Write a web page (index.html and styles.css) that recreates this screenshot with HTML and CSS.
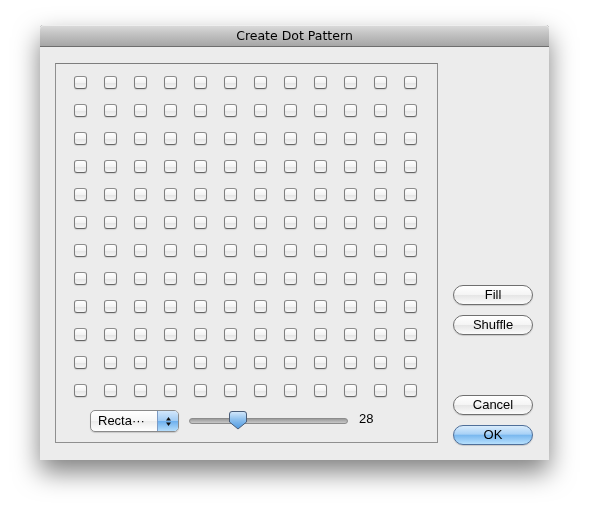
FILE: index.html
```html
<!DOCTYPE html>
<html>
<head>
<meta charset="utf-8">
<link rel="stylesheet" href="styles.css">
</head>
<body>
<div class="window">
  <div class="titlebar">Create Dot Pattern</div>
  <div class="content">
    <div class="box">
      <div class="grid">
        <span class="cb"></span><span class="cb"></span><span class="cb"></span><span class="cb"></span><span class="cb"></span><span class="cb"></span><span class="cb"></span><span class="cb"></span><span class="cb"></span><span class="cb"></span><span class="cb"></span><span class="cb"></span>
        <span class="cb"></span><span class="cb"></span><span class="cb"></span><span class="cb"></span><span class="cb"></span><span class="cb"></span><span class="cb"></span><span class="cb"></span><span class="cb"></span><span class="cb"></span><span class="cb"></span><span class="cb"></span>
        <span class="cb"></span><span class="cb"></span><span class="cb"></span><span class="cb"></span><span class="cb"></span><span class="cb"></span><span class="cb"></span><span class="cb"></span><span class="cb"></span><span class="cb"></span><span class="cb"></span><span class="cb"></span>
        <span class="cb"></span><span class="cb"></span><span class="cb"></span><span class="cb"></span><span class="cb"></span><span class="cb"></span><span class="cb"></span><span class="cb"></span><span class="cb"></span><span class="cb"></span><span class="cb"></span><span class="cb"></span>
        <span class="cb"></span><span class="cb"></span><span class="cb"></span><span class="cb"></span><span class="cb"></span><span class="cb"></span><span class="cb"></span><span class="cb"></span><span class="cb"></span><span class="cb"></span><span class="cb"></span><span class="cb"></span>
        <span class="cb"></span><span class="cb"></span><span class="cb"></span><span class="cb"></span><span class="cb"></span><span class="cb"></span><span class="cb"></span><span class="cb"></span><span class="cb"></span><span class="cb"></span><span class="cb"></span><span class="cb"></span>
        <span class="cb"></span><span class="cb"></span><span class="cb"></span><span class="cb"></span><span class="cb"></span><span class="cb"></span><span class="cb"></span><span class="cb"></span><span class="cb"></span><span class="cb"></span><span class="cb"></span><span class="cb"></span>
        <span class="cb"></span><span class="cb"></span><span class="cb"></span><span class="cb"></span><span class="cb"></span><span class="cb"></span><span class="cb"></span><span class="cb"></span><span class="cb"></span><span class="cb"></span><span class="cb"></span><span class="cb"></span>
        <span class="cb"></span><span class="cb"></span><span class="cb"></span><span class="cb"></span><span class="cb"></span><span class="cb"></span><span class="cb"></span><span class="cb"></span><span class="cb"></span><span class="cb"></span><span class="cb"></span><span class="cb"></span>
        <span class="cb"></span><span class="cb"></span><span class="cb"></span><span class="cb"></span><span class="cb"></span><span class="cb"></span><span class="cb"></span><span class="cb"></span><span class="cb"></span><span class="cb"></span><span class="cb"></span><span class="cb"></span>
        <span class="cb"></span><span class="cb"></span><span class="cb"></span><span class="cb"></span><span class="cb"></span><span class="cb"></span><span class="cb"></span><span class="cb"></span><span class="cb"></span><span class="cb"></span><span class="cb"></span><span class="cb"></span>
        <span class="cb"></span><span class="cb"></span><span class="cb"></span><span class="cb"></span><span class="cb"></span><span class="cb"></span><span class="cb"></span><span class="cb"></span><span class="cb"></span><span class="cb"></span><span class="cb"></span><span class="cb"></span>
      </div>
      <div class="controls">
        <div class="popup">
          <span class="popup-label">Recta···</span>
          <span class="popup-arrows">
            <svg width="7" height="11" viewBox="0 0 7 11"><path d="M3.5 1 L6 4.5 L1 4.5 Z" fill="#111"/><path d="M3.5 10 L6 6.5 L1 6.5 Z" fill="#111"/></svg>
          </span>
        </div>
        <div class="slider">
          <div class="track"></div>
          <svg class="knob" width="18" height="19" viewBox="0 0 18 19">
            <defs>
              <linearGradient id="kg" x1="0" y1="0" x2="0" y2="1">
                <stop offset="0" stop-color="#d6e9fb"/>
                <stop offset="0.45" stop-color="#8fc1ee"/>
                <stop offset="1" stop-color="#4d98e0"/>
              </linearGradient>
            </defs>
            <path d="M3 0.5 H15 Q17.5 0.5 17.5 3 V11 L9 18 L0.5 11 V3 Q0.5 0.5 3 0.5 Z" fill="url(#kg)" stroke="#4a5d78" stroke-width="1"/>
          </svg>
        </div>
        <span class="value">28</span>
      </div>
    </div>
    <div class="side">
      <button class="btn first">Fill</button>
      <button class="btn">Shuffle</button>
      <button class="btn gap">Cancel</button>
      <button class="btn default">OK</button>
    </div>
  </div>
</div>
</body>
</html>
```

FILE: styles.css
```css
html, body {
  margin: 0;
  padding: 0;
  background: #ffffff;
}
body {
  padding: 25px 0 60px 40px;
  font-family: "DejaVu Sans", "Liberation Sans", sans-serif;
  color: #000;
}
.window {
  width: 509px;
  height: 435px;
  background: #ececec;
  border-radius: 4px 4px 0 0;
  filter: drop-shadow(0 0 0.6px rgba(0,0,0,0.6)) drop-shadow(0 12px 13px rgba(0,0,0,0.5));
  display: flex;
  flex-direction: column;
}
.titlebar {
  height: 21px;
  border-bottom: 1px solid #6e6e6e;
  background: linear-gradient(#dcdcdc, #c4c4c4 40%, #a6a6a6);
  border-radius: 4px 4px 0 0;
  text-align: center;
  font-size: 12.5px;
  line-height: 22px;
  color: #000;
  box-shadow: inset 0 1px 0 #eeeeee;
}
.content {
  display: flex;
  padding: 16px 15px 0 15px;
}
.box {
  border: 1px solid #8f8f8f;
  border-top-color: #7d7d7d;
  padding: 12px 0 0 18px;
  box-sizing: content-box;
  width: 363px;
  height: 366px;
}
.grid {
  display: grid;
  grid-template-columns: repeat(12, 13px);
  grid-auto-rows: 13px;
  column-gap: 17px;
  row-gap: 15px;
}
.cb {
  width: 11px;
  height: 11px;
  border: 1px solid #7e7e7e;
  border-top-color: #8c8c8c;
  border-bottom-color: #666666;
  border-radius: 3px;
  background: linear-gradient(#ffffff, #f3f3f3 50%, #e4e4e4 55%, #f6f6f6);
  box-shadow: 0 1px 1px rgba(0,0,0,0.12);
}
.controls {
  display: flex;
  align-items: center;
  margin: 13px 0 0 16px;
  height: 22px;
}
.popup {
  width: 87px;
  height: 20px;
  border: 1px solid #8a8a8a;
  border-radius: 5px;
  background: linear-gradient(#ffffff, #f6f6f6 50%, #ececec 52%, #ffffff);
  display: flex;
  overflow: hidden;
  box-shadow: 0 1px 1px rgba(0,0,0,0.15);
}
.popup-label {
  flex: 1;
  font-family: "Liberation Sans", sans-serif;
  font-size: 13px;
  line-height: 20px;
  padding-left: 7px;
}
.popup-arrows {
  width: 20px;
  border-left: 1px solid #7d9bc4;
  background: linear-gradient(#d3e7fb, #9fcaf3 50%, #6eb0ee 52%, #b5ddfb);
  display: flex;
  align-items: center;
  justify-content: center;
}
.slider {
  position: relative;
  width: 159px;
  height: 22px;
  margin-left: 10px;
  display: flex;
  align-items: center;
}
.track {
  width: 100%;
  border: 1px solid #8c8c8c;
  border-radius: 3px;
  background: linear-gradient(#9a9a9a, #c8c8c8);
  box-sizing: border-box;
  height: 6px;
}
.knob {
  position: absolute;
  left: 40px;
  top: 1px;
}
.value {
  margin-left: 11px;
  font-family: "Liberation Sans", sans-serif;
  font-size: 13px;
  margin-top: -6px;
}
.side {
  display: flex;
  flex-direction: column;
  margin-left: 15px;
}
.btn {
  width: 80px;
  height: 20px;
  margin: 10px 0 0 0;
  padding: 0;
  border: 1px solid #6f6f6f;
  border-radius: 10px;
  background: linear-gradient(#ffffff, #f4f4f4 50%, #e6e6e6 52%, #fbfbfb);
  font-family: "Liberation Sans", sans-serif;
  font-size: 13px;
  line-height: 18px;
  color: #000;
  box-shadow: 0 1px 1px rgba(0,0,0,0.15);
}
.btn.first {
  margin-top: 222px;
}
.btn.gap {
  margin-top: 60px;
}
.btn.default {
  border-color: #4f6f99;
  background: linear-gradient(#d9ecfc, #a8d1f6 45%, #7ab8ef 52%, #b7e0fd);
}
```
